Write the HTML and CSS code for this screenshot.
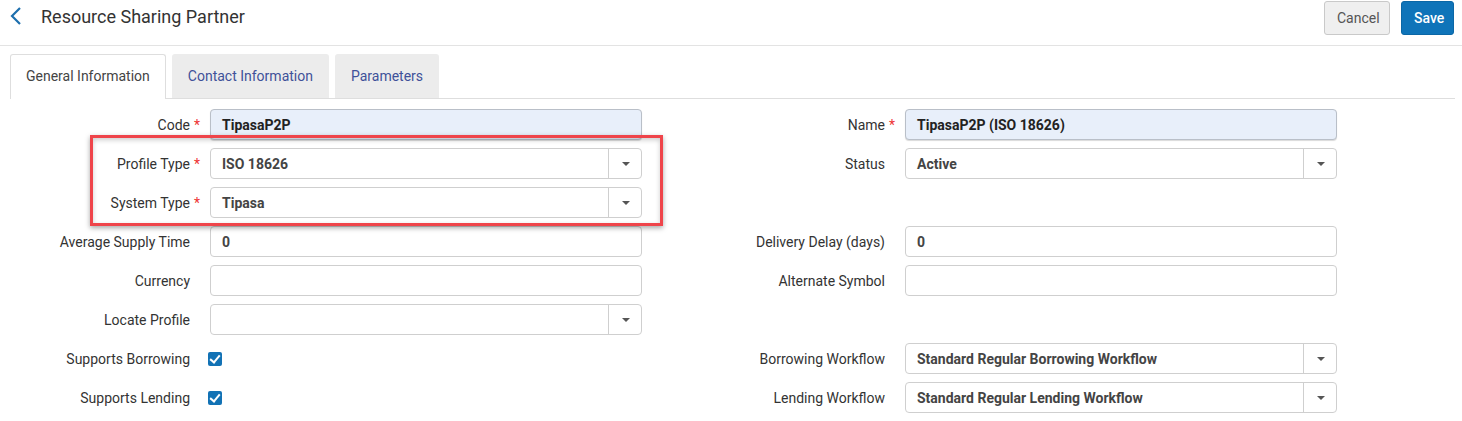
FILE: index.html
```html
<!DOCTYPE html>
<html lang="en">
<head>
    <meta charset="UTF-8">
    <title>Resource Sharing Partner</title>
    <link rel="stylesheet" href="styles.css">
</head>
<body>
    <div class="header">
        <a class="back" href="#">
            <svg width="14" height="20" viewBox="0 0 14 20"><path d="M11 2 L3 10 L11 18" fill="none" stroke="#1d6fae" stroke-width="2.2"/></svg>
        </a>
        <h1>Resource Sharing Partner</h1>
        <div class="actions">
            <button class="btn cancel">Cancel</button>
            <button class="btn save">Save</button>
        </div>
    </div>

    <div class="tabs">
        <div class="tab active">General Information</div>
        <div class="tab">Contact Information</div>
        <div class="tab">Parameters</div>
    </div>

    <div class="form">
        <label class="req">Code</label>
        <div class="field filled">TipasaP2P</div>
        <label class="req">Name</label>
        <div class="field filled">TipasaP2P (ISO 18626)</div>

        <label class="req">Profile Type</label>
        <div class="field select"><span>ISO 18626</span><i class="caret"></i></div>
        <label>Status</label>
        <div class="field select"><span>Active</span><i class="caret"></i></div>

        <label class="req">System Type</label>
        <div class="field select"><span>Tipasa</span><i class="caret"></i></div>
        <span></span>
        <span></span>

        <label>Average Supply Time</label>
        <div class="field"><span>0</span></div>
        <label>Delivery Delay (days)</label>
        <div class="field"><span>0</span></div>

        <label>Currency</label>
        <div class="field"></div>
        <label>Alternate Symbol</label>
        <div class="field"></div>

        <label>Locate Profile</label>
        <div class="field select"><span></span><i class="caret"></i></div>
        <span></span>
        <span></span>

        <label>Supports Borrowing</label>
        <div class="check-cell"><span class="checkbox"></span></div>
        <label>Borrowing Workflow</label>
        <div class="field select"><span>Standard Regular Borrowing Workflow</span><i class="caret"></i></div>

        <label>Supports Lending</label>
        <div class="check-cell"><span class="checkbox"></span></div>
        <label>Lending Workflow</label>
        <div class="field select"><span>Standard Regular Lending Workflow</span><i class="caret"></i></div>

        <div class="highlight"></div>
    </div>
</body>
</html>
```

FILE: styles.css
```css
body {
    margin: 0;
    font-family: Roboto, "Liberation Sans", sans-serif;
    font-size: 14px;
    color: #333;
    background: #fff;
}

.header {
    display: flex;
    align-items: center;
    height: 45px;
    border-bottom: 1px solid #e3e3e3;
    padding: 0 8px 0 9px;
}

.back {
    display: flex;
    width: 14px;
    height: 20px;
    margin-top: -14px;
}

.header h1 {
    font-size: 18px;
    font-weight: normal;
    color: #333;
    margin: -13px 0 0 18px;
    flex: 1;
}

.actions {
    display: flex;
    gap: 11px;
    margin-top: -10px;
}

.btn {
    height: 34px;
    font-family: Roboto, "Liberation Sans", sans-serif;
    font-size: 14px;
    border-radius: 3px;
    padding: 0 12px;
    cursor: pointer;
}

.cancel {
    background: #efefef;
    border: 1px solid #c9c9c9;
    color: #555;
    width: 66px;
}

.save {
    background: #0f74b9;
    border: 1px solid #0b67a6;
    color: #fff;
    font-weight: 500;
    width: 53px;
}

.tabs {
    display: flex;
    gap: 6px;
    margin: 8px 7px 0 10px;
    border-bottom: 1px solid #dedede;
    height: 44px;
}

.tab {
    height: 43px;
    line-height: 43px;
    padding: 0 15px;
    background: #ececec;
    color: #3f5199;
    border: 1px solid #ececec;
    border-bottom: none;
    border-radius: 3px 3px 0 0;
}

.tab.active {
    background: #fff;
    color: #444;
    border-color: #dedede;
    height: 44px;
    padding: 0 15px;
}

.form {
    position: relative;
    display: grid;
    grid-template-columns: 190px 432px 223px 432px;
    grid-auto-rows: 31px;
    column-gap: 20px;
    row-gap: 8px;
    padding-top: 10px;
}

.form label {
    justify-self: end;
    align-self: center;
    position: relative;
    color: #333;
}

.form label.req::after {
    content: "*";
    position: absolute;
    left: 100%;
    margin-left: 4px;
    top: 0;
    color: #e33;
}

.field {
    display: flex;
    align-items: center;
    border: 1px solid #cfcfcf;
    border-radius: 4px;
    padding-left: 11px;
    font-weight: bold;
    color: #444;
    background: #fff;
    box-sizing: border-box;
}

.field.filled {
    background: #e8effa;
    border-color: #b9bfc8;
    color: #222;
    box-shadow: 0 1px 1px rgba(0, 0, 0, 0.15);
}

.field.select span {
    flex: 1;
}

.caret {
    width: 32px;
    height: 100%;
    border-left: 1px solid #cfcfcf;
    position: relative;
}

.caret::after {
    content: "";
    position: absolute;
    left: 13px;
    top: 13px;
    border-left: 4px solid transparent;
    border-right: 4px solid transparent;
    border-top: 4px solid #555;
}

.check-cell {
    display: flex;
    align-items: center;
    margin-left: -2px;
}

.checkbox {
    width: 14px;
    height: 14px;
    border-radius: 2px;
    background: #1272b5;
    position: relative;
}

.checkbox::after {
    content: "";
    position: absolute;
    left: 4px;
    top: 1px;
    width: 4px;
    height: 8px;
    border: solid #fff;
    border-width: 0 2px 2px 0;
    transform: rotate(40deg);
}

.highlight {
    position: absolute;
    left: 90px;
    top: 36px;
    width: 567px;
    height: 85px;
    border: 3px solid #ef444a;
    box-shadow: 0 2px 5px rgba(0, 0, 0, 0.35), inset 0 2px 5px rgba(0, 0, 0, 0.2);
    pointer-events: none;
}
```
